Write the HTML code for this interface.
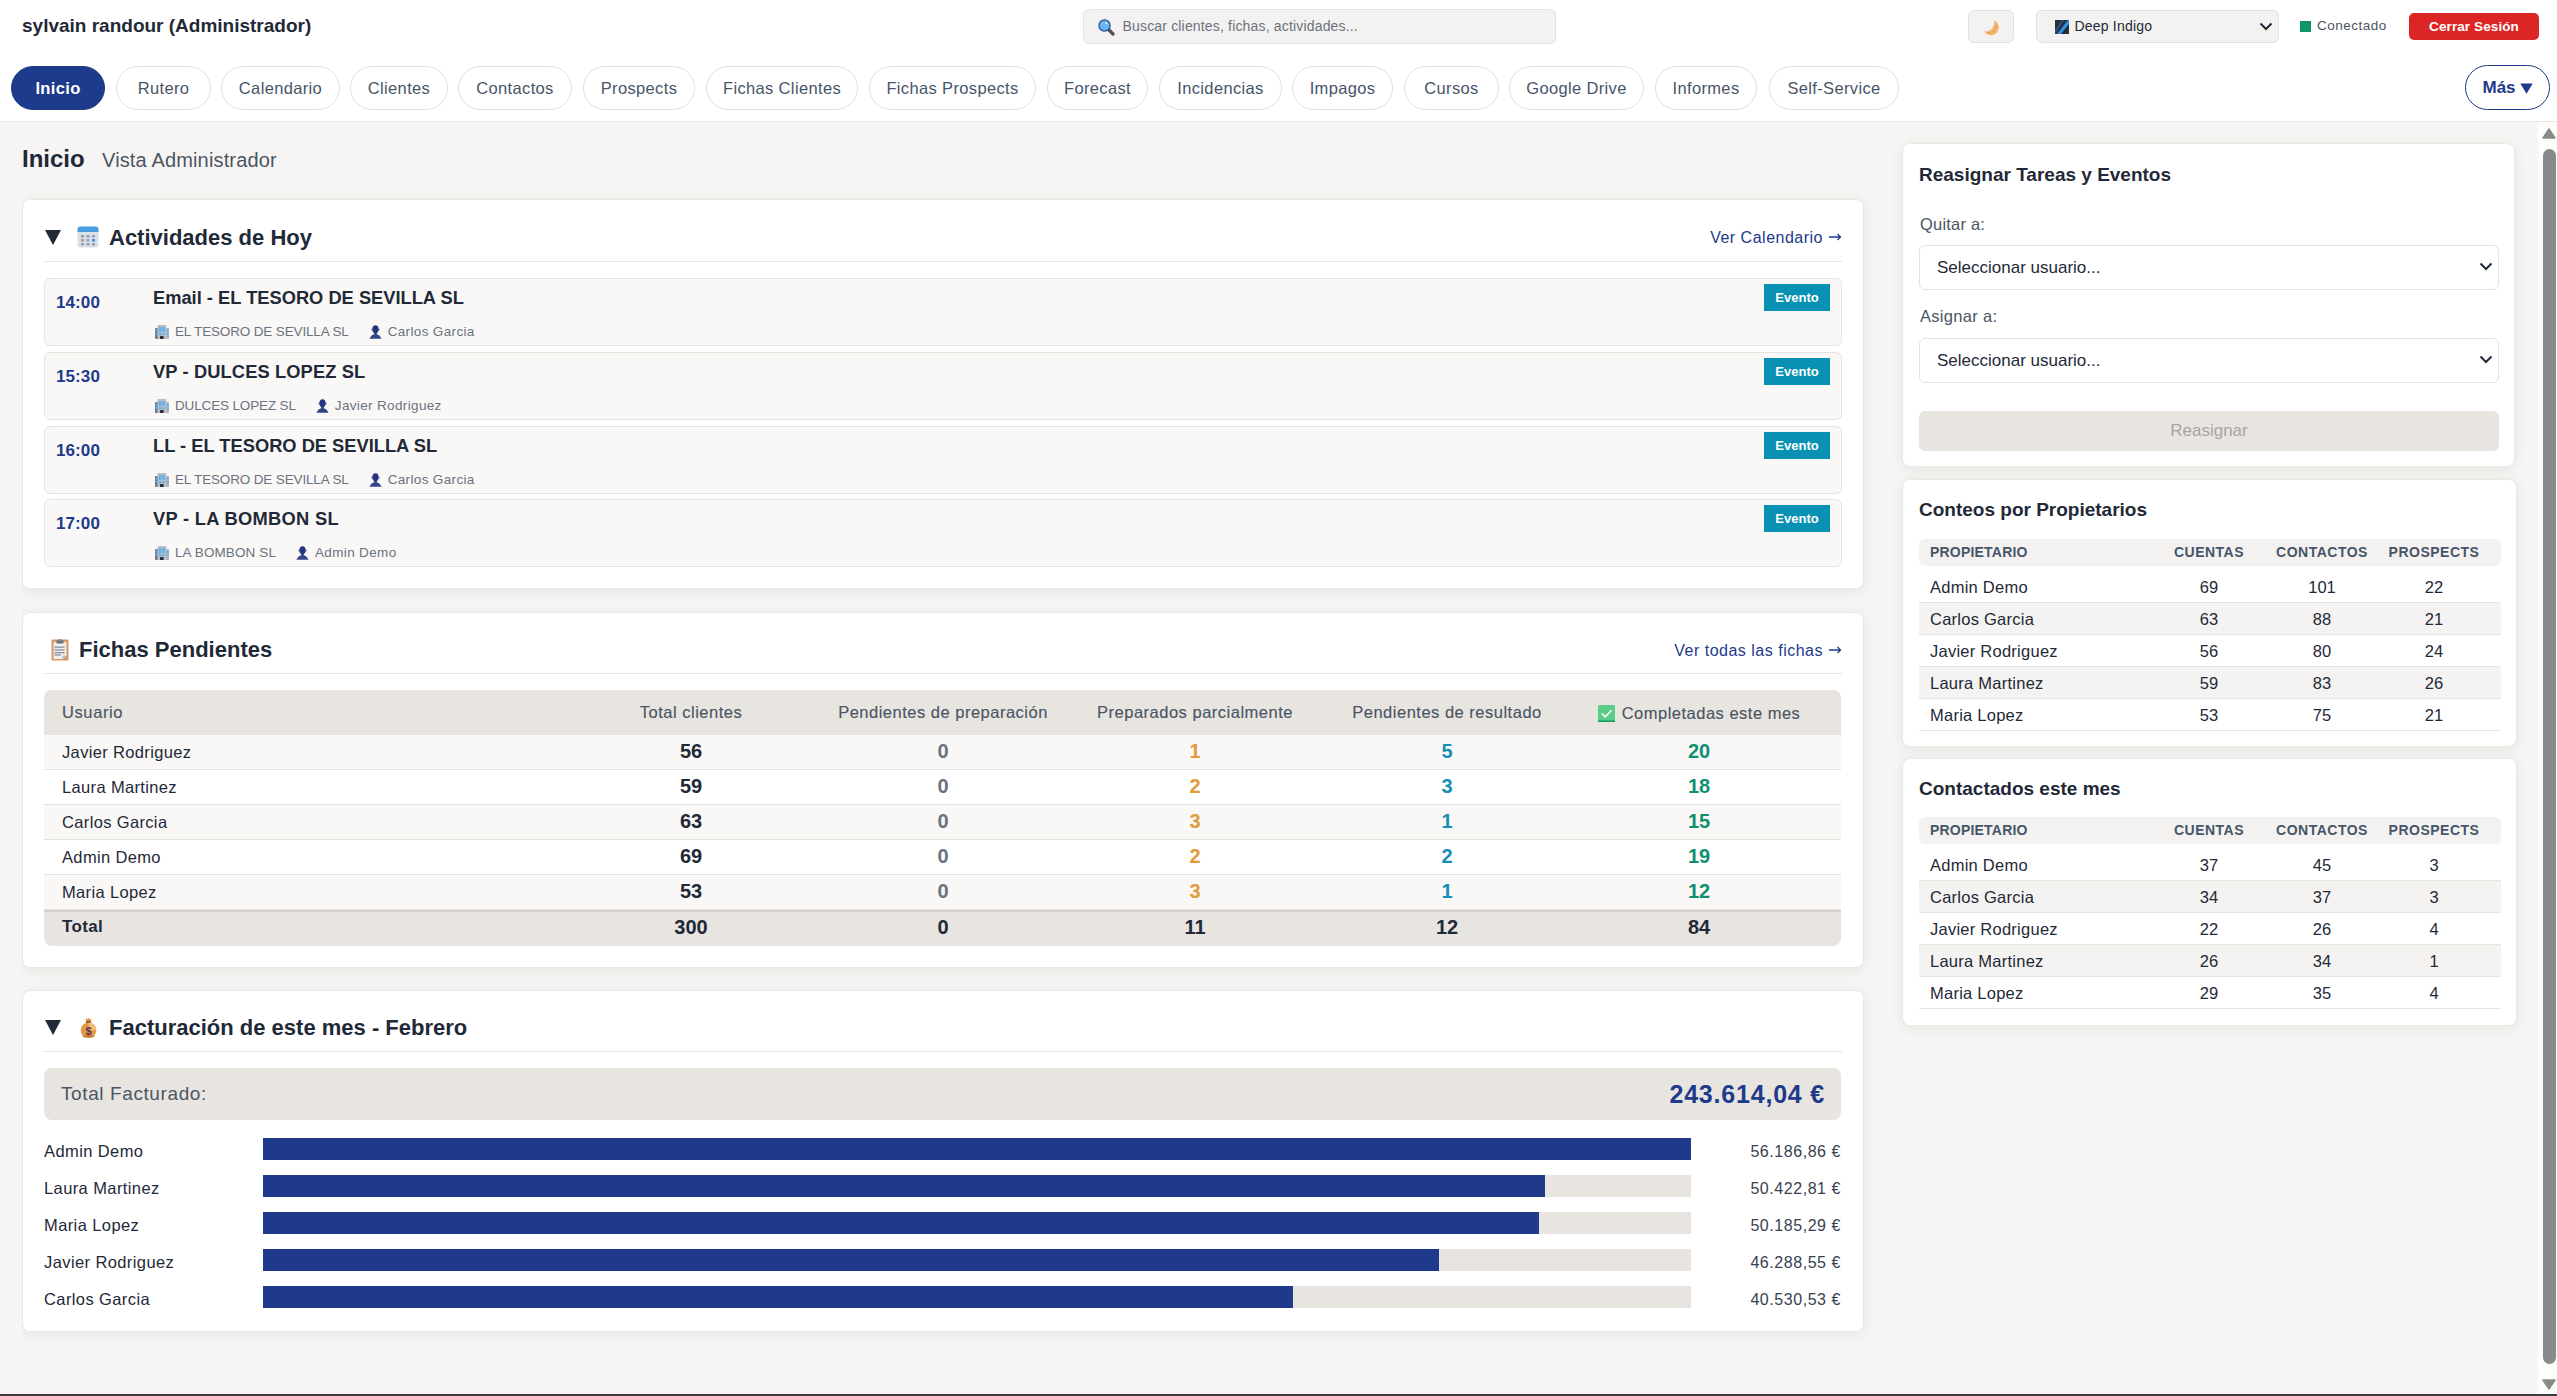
<!DOCTYPE html>
<html lang="es">
<head>
<meta charset="utf-8">
<title>Inicio</title>
<style>
*{box-sizing:border-box;margin:0;padding:0}
html,body{width:2557px;height:1396px;overflow:hidden}
body{font-family:"Liberation Sans",sans-serif;background:#f6f5f3;color:#1f2937;position:relative}
.abs{position:absolute}
/* header */
#hdr{position:absolute;left:0;top:0;width:2557px;height:55px;background:#fff}
#user{left:22px;top:15px;font-size:19px;font-weight:700;color:#1f2937;white-space:nowrap}
#search{left:1083px;top:9px;width:473px;height:35px;background:#f3f2f0;border:1px solid #e5e2de;border-radius:6px}
#search .ph{position:absolute;left:38.5px;top:8px;font-size:14px;letter-spacing:.17px;color:#6b7280;white-space:nowrap}
#moon{left:1968px;top:10px;width:46px;height:33px;background:#f3f2f0;border:1px solid #e5e1dc;border-radius:6px}
#theme{left:2036px;top:10px;width:243px;height:33px;background:#f3f2f0;border:1px solid #e5e1dc;border-radius:6px}
#theme .t{position:absolute;left:37.5px;top:7px;font-size:14px;letter-spacing:.2px;color:#1f2937;white-space:nowrap}
#conn{left:2300px;top:21px;width:11px;height:11px;background:#10956a}
#conntx{left:2317px;top:18px;font-size:13.5px;letter-spacing:.5px;color:#4b5563;white-space:nowrap}
#logout{left:2409px;top:13px;width:130px;height:27px;background:#dc2626;border-radius:5px;color:#fff;font-size:13.5px;letter-spacing:.1px;font-weight:700;text-align:center;line-height:27px;white-space:nowrap}
/* nav */
#nav{position:absolute;left:0;top:55px;width:2557px;height:67px;background:#fff;border-bottom:1px solid #e7e4e0}
.pill{position:absolute;top:11px;height:44px;border:1px solid #e3dfdb;border-radius:22px;background:#fff;color:#475569;font-size:16.5px;letter-spacing:.35px;text-align:center;line-height:42px;white-space:nowrap}
.pill.on{background:#1e3a8a;border-color:#1e3a8a;color:#fff;font-weight:700}
#mas{left:2465px;top:10px;width:85px;height:45px;border:1.6px solid #1e3a8a;border-radius:23px;color:#1e3a8a;font-weight:700;font-size:17px}
#mas span{position:absolute;left:16.5px;top:12px;white-space:nowrap}
#mas svg{position:absolute;left:53.5px;top:16.5px}
/* main */
#main{position:absolute;left:0;top:122px;width:2557px;height:1272px;overflow:hidden;background:#f6f5f3}

.card{position:absolute;background:#fff;border:1px solid #ebe8e4;border-radius:8px;box-shadow:0 2px 14px rgba(40,30,20,.07)}
h1.pg{position:absolute;left:22px;top:23px;font-size:24px;font-weight:700;color:#1f2937;white-space:nowrap}
.pgsub{position:absolute;left:102px;top:27px;font-size:20px;letter-spacing:.15px;color:#4b5563;white-space:nowrap}
.tri{position:absolute;width:0;height:0;border-left:8.5px solid transparent;border-right:8.5px solid transparent;border-top:15px solid #1f2937}
.ctitle{position:absolute;font-size:22px;font-weight:700;color:#1f2937;white-space:nowrap}
.clink{position:absolute;font-size:16px;letter-spacing:.5px;color:#1e3a8a;white-space:nowrap}
.sep{position:absolute;height:1px;background:#e7e5e4}
.item{position:absolute;left:21px;width:1798px;height:68px;background:#f9f8f6;border:1px solid #e7e4e0;border-radius:6px}
.item .tm{position:absolute;left:11px;top:14px;font-size:17px;letter-spacing:.1px;font-weight:700;color:#1e3a8a;white-space:nowrap}
.item .ti{position:absolute;left:108px;top:8px;font-size:18.3px;font-weight:700;color:#1f2937;white-space:nowrap}
.item .sub{position:absolute;left:110px;top:45px;font-size:13.5px;letter-spacing:-.15px;color:#6b7280;white-space:nowrap;display:flex;align-items:center}
.item .sub svg{margin-right:6px}
.item .badge{position:absolute;left:1719px;top:5px;width:66px;height:27px;background:#0891b2;color:#fff;font-size:13px;font-weight:700;text-align:center;line-height:27px}

.tbl{position:absolute;left:21px;top:77px;width:1797px}
.tr{position:relative;display:flex;height:35px;align-items:center;border-bottom:1px solid #e7e4e0}
.tr.h{height:45px;background:#e8e5e1;border-radius:8px 8px 0 0;border-bottom:none;color:#4b5563;font-size:16px}
.tr.odd{background:#f9f8f6}
.tr.ev{background:#fff}
.tr.tot{height:36px;padding-bottom:2px;background:#e8e5e1;border-top:2px solid #d6d2cd;border-bottom:none;border-radius:0 0 8px 8px}
.td{white-space:nowrap}
.td.n{width:521px;padding-left:18px;font-size:16.5px;letter-spacing:.35px;color:#1f2937}
.td.c{width:252px;text-align:center;font-size:20px;font-weight:700}
.tr.h .td.c{font-size:16.5px;font-weight:400;letter-spacing:.5px;color:#4b5563;-webkit-text-stroke:.15px #4b5563}
.tr.h .td.n{letter-spacing:.6px;color:#4b5563;-webkit-text-stroke:.15px #4b5563}
.td.c.last{width:268px;padding-right:16px}
.tr.odd .td.c,.tr.ev .td.c,.tr.tot .td.c{position:relative;top:-1px}
.bar{position:absolute;left:219px;width:1428px;height:22px;background:#e8e5e1}
.bar i{position:absolute;left:0;top:0;height:22px;background:#1f3a8a}
.bname{position:absolute;left:0;margin-top:2px;letter-spacing:.4px;font-size:16.5px;color:#1f2937;white-space:nowrap}
.bval{position:absolute;right:0;margin-top:2px;letter-spacing:.55px;font-size:16px;color:#374151;white-space:nowrap}
.pnl{position:absolute;background:#fff;border:1px solid #ebe8e4;border-radius:8px;box-shadow:0 2px 14px rgba(40,30,20,.07)}
.ptitle{position:absolute;left:16px;font-size:19px;font-weight:700;color:#1f2937;white-space:nowrap}
.plabel{position:absolute;left:17px;font-size:16.5px;color:#4b5563;white-space:nowrap}
.psel{position:absolute;left:16px;width:580px;height:45px;border:1px solid #e5e2de;border-radius:6px;background:#fff}
.psel span{position:absolute;left:17px;top:12px;font-size:17px;color:#1f2937;white-space:nowrap}
.psel svg{position:absolute;right:5px;top:16px}
.pbtn{position:absolute;left:16px;width:580px;height:40px;border-radius:6px;background:#e8e5e1;color:#a8a4a0;font-size:17px;text-align:center;line-height:40px}
.ptbl{position:absolute;left:16px;width:582px}
.ptr{display:flex;height:32px;align-items:center;border-bottom:1px solid #e7e4e0;font-size:16.5px;color:#1f2937;padding-top:2px}
.ptr.h{height:27px;background:#f3f2f0;border-radius:6px;border-bottom:none;font-size:14px;font-weight:700;color:#475569;margin-bottom:5px;letter-spacing:.5px;padding-bottom:2px;padding-top:0}
.ptr.h .a{letter-spacing:.2px}
.ptr.alt{background:#f4f3f1}
.ptr .a{width:236px;padding-left:11px;white-space:nowrap;letter-spacing:.25px}
.ptr .b{width:112px;text-align:center;margin-left:-2px;margin-right:2px}
.ptr .d{width:112px;text-align:center;margin-left:-1px;margin-right:1px}
.ptr .e{width:112px;text-align:center;margin-left:-1px}
#sb{position:absolute;left:2538px;top:0px;width:19px;height:1272px;background:#fdfdfc}
#bottombar{position:absolute;left:0;top:1394px;width:2557px;height:2px;background:#3b3b3d}
</style>
</head>
<body>
<div id="hdr">
  <div id="user" class="abs">sylvain randour (Administrador)</div>
  <div id="search" class="abs"><svg class="abs" style="left:14px;top:9px" width="17" height="17" viewBox="0 0 17 17"><path d="M10.5 10.5l4.5 4.5" stroke="#5a4a52" stroke-width="3.2" stroke-linecap="round"/><circle cx="6.5" cy="6.5" r="5.6" fill="#6ab4ef" stroke="#2b4c9a" stroke-width="1.2"/><circle cx="8.3" cy="4.3" r="1" fill="#dff0ff"/></svg><span class="ph">Buscar clientes, fichas, actividades...</span></div>
  <div id="moon" class="abs"><svg class="abs" style="left:14px;top:8px" width="17" height="17" viewBox="0 0 17 17"><path d="M11 1.2A7.8 7.8 0 1 1 1.2 12.3 8.8 8.8 0 0 0 11 1.2z" fill="#f2b56e"/><circle cx="6" cy="13.6" r=".8" fill="#d98c3e"/><circle cx="10.5" cy="12.2" r=".7" fill="#d98c3e"/><circle cx="13" cy="8" r=".7" fill="#d98c3e"/><circle cx="8.5" cy="14.5" r=".5" fill="#e6a050"/></svg></div>
  <div id="theme" class="abs"><svg class="abs" style="left:18px;top:9px" width="14" height="14" viewBox="0 0 14 14"><rect width="14" height="14" fill="#2a2f3a"/><path d="M6 14L14 4V0h-1L2 14z" fill="#2f8fe0"/><path d="M7.5 14L14 6.5V5L6.5 14z" fill="#1a2540"/><path d="M0 14L9 0H7L0 10z" fill="#2a6fc0" opacity=".6"/></svg><span class="t">Deep Indigo</span><svg class="abs" style="right:5px;top:11px" width="14" height="9" viewBox="0 0 14 9"><path d="M1.5 1.5l5.5 5.5 5.5-5.5" stroke="#1f2937" stroke-width="2" fill="none"/></svg></div>
  <div id="conn" class="abs"></div>
  <div id="conntx" class="abs">Conectado</div>
  <div id="logout" class="abs">Cerrar Sesión</div>
</div>
<div id="nav">
  <div class="pill on" style="left:11px;width:94px">Inicio</div>
  <div class="pill" style="left:116px;width:95px">Rutero</div>
  <div class="pill" style="left:221px;width:119px">Calendario</div>
  <div class="pill" style="left:350px;width:98px">Clientes</div>
  <div class="pill" style="left:458px;width:114px">Contactos</div>
  <div class="pill" style="left:583px;width:112px">Prospects</div>
  <div class="pill" style="left:706px;width:152px">Fichas Clientes</div>
  <div class="pill" style="left:869px;width:167px">Fichas Prospects</div>
  <div class="pill" style="left:1047px;width:101px">Forecast</div>
  <div class="pill" style="left:1159px;width:123px">Incidencias</div>
  <div class="pill" style="left:1292px;width:101px">Impagos</div>
  <div class="pill" style="left:1404px;width:95px">Cursos</div>
  <div class="pill" style="left:1509px;width:135px">Google Drive</div>
  <div class="pill" style="left:1655px;width:102px">Informes</div>
  <div class="pill" style="left:1769px;width:130px">Self-Service</div>
  <div id="mas" class="abs"><span>Más</span><svg width="13" height="11" viewBox="0 0 13 11"><path d="M0.3 0.5h12.4L6.5 10.8z" fill="#1e3a8a"/></svg></div>
</div>
<div id="main">
  <h1 class="pg">Inicio</h1>
  <div class="pgsub">Vista Administrador</div>
  <div class="card" id="c1" style="left:22px;top:77px;width:1842px;height:390px">
    <div class="tri" style="left:22px;top:30px"></div>
    <svg class="abs" style="left:54px;top:26px" width="22" height="22" viewBox="0 0 22 22"><rect x="0.5" y="1" width="21" height="20.5" rx="3" fill="#d9e1e8"/><path d="M0.5 3.5a3 3 0 0 1 3-3h15a3 3 0 0 1 3 3v2.5h-21z" fill="#4a9de0"/><g fill="#9aa0aa"><rect x="4" y="9" width="3" height="2.5"/><rect x="9.5" y="9" width="3" height="2.5"/><rect x="15" y="9" width="3" height="2.5"/><rect x="4" y="13" width="3" height="2.5"/><rect x="9.5" y="13" width="3" height="2.5"/><rect x="4" y="17" width="3" height="2.5"/><rect x="9.5" y="17" width="3" height="2.5"/><rect x="15" y="17" width="3" height="2.5"/></g><rect x="15" y="13" width="3" height="2.5" fill="#3d8fdc"/></svg>
    <div class="ctitle" style="left:86px;top:25px">Actividades de Hoy</div>
    <div class="clink" style="right:21px;top:29px">Ver Calendario<svg style="display:inline-block;vertical-align:2px;margin-left:6px" width="13" height="8" viewBox="0 0 13 8"><path d="M0 4h11.5M8.5 1l3 3-3 3" stroke="#1e3a8a" stroke-width="1.3" fill="none"/></svg></div>
    <div class="sep" style="left:21px;top:61px;width:1798px"></div>
    <div class="item" style="top:78px"><div class="tm">14:00</div><div class="ti">Email - EL TESORO DE SEVILLA SL</div><div class="sub"><svg width="14" height="14" viewBox="0 0 14 14"><rect x="0" y="3" width="3" height="11" rx=".8" fill="#6f7b8c"/><rect x="11" y="3" width="3" height="11" rx=".8" fill="#aab3c0"/><rect x="2.5" y="0" width="9" height="14" rx=".8" fill="#b9bec6"/><g fill="#5ab0f0"><rect x="0.3" y="5" width="2" height="1.6"/><rect x="0.3" y="8" width="2" height="1.6"/><rect x="11.7" y="5" width="2" height="1.6"/><rect x="11.7" y="8" width="2" height="1.6"/><rect x="4" y="2" width="2.3" height="5"/><rect x="7.3" y="2" width="2.3" height="5"/><rect x="4" y="8.3" width="2.3" height="1.8"/><rect x="7.3" y="8.3" width="2.3" height="1.8"/></g><rect x="5" y="11" width="3.6" height="3" rx=".5" fill="#2a2e36"/></svg><span>EL TESORO DE SEVILLA SL</span><span style="display:inline-block;width:20px"></span><svg width="13" height="14" viewBox="0 0 13 14"><ellipse cx="6.5" cy="4.2" rx="3.1" ry="3.9" fill="#26357f"/><rect x="2.6" y="3.6" width="1" height="2" rx=".5" fill="#26357f"/><rect x="9.4" y="3.6" width="1" height="2" rx=".5" fill="#26357f"/><path d="M0.4 13.8L2.6 10.6 5 9.2h3l2.4 1.4 2.2 3.2z" fill="#34448a"/><rect x="5.2" y="7.2" width="2.6" height="2.4" fill="#26357f"/></svg><span style="letter-spacing:.35px">Carlos Garcia</span></div><div class="badge">Evento</div></div>
    <div class="item" style="top:152px"><div class="tm">15:30</div><div class="ti" style="letter-spacing:.12px">VP - DULCES LOPEZ SL</div><div class="sub"><svg width="14" height="14" viewBox="0 0 14 14"><rect x="0" y="3" width="3" height="11" rx=".8" fill="#6f7b8c"/><rect x="11" y="3" width="3" height="11" rx=".8" fill="#aab3c0"/><rect x="2.5" y="0" width="9" height="14" rx=".8" fill="#b9bec6"/><g fill="#5ab0f0"><rect x="0.3" y="5" width="2" height="1.6"/><rect x="0.3" y="8" width="2" height="1.6"/><rect x="11.7" y="5" width="2" height="1.6"/><rect x="11.7" y="8" width="2" height="1.6"/><rect x="4" y="2" width="2.3" height="5"/><rect x="7.3" y="2" width="2.3" height="5"/><rect x="4" y="8.3" width="2.3" height="1.8"/><rect x="7.3" y="8.3" width="2.3" height="1.8"/></g><rect x="5" y="11" width="3.6" height="3" rx=".5" fill="#2a2e36"/></svg><span>DULCES LOPEZ SL</span><span style="display:inline-block;width:20px"></span><svg width="13" height="14" viewBox="0 0 13 14"><ellipse cx="6.5" cy="4.2" rx="3.1" ry="3.9" fill="#26357f"/><rect x="2.6" y="3.6" width="1" height="2" rx=".5" fill="#26357f"/><rect x="9.4" y="3.6" width="1" height="2" rx=".5" fill="#26357f"/><path d="M0.4 13.8L2.6 10.6 5 9.2h3l2.4 1.4 2.2 3.2z" fill="#34448a"/><rect x="5.2" y="7.2" width="2.6" height="2.4" fill="#26357f"/></svg><span style="letter-spacing:.35px">Javier Rodriguez</span></div><div class="badge">Evento</div></div>
    <div class="item" style="top:226px"><div class="tm">16:00</div><div class="ti">LL - EL TESORO DE SEVILLA SL</div><div class="sub"><svg width="14" height="14" viewBox="0 0 14 14"><rect x="0" y="3" width="3" height="11" rx=".8" fill="#6f7b8c"/><rect x="11" y="3" width="3" height="11" rx=".8" fill="#aab3c0"/><rect x="2.5" y="0" width="9" height="14" rx=".8" fill="#b9bec6"/><g fill="#5ab0f0"><rect x="0.3" y="5" width="2" height="1.6"/><rect x="0.3" y="8" width="2" height="1.6"/><rect x="11.7" y="5" width="2" height="1.6"/><rect x="11.7" y="8" width="2" height="1.6"/><rect x="4" y="2" width="2.3" height="5"/><rect x="7.3" y="2" width="2.3" height="5"/><rect x="4" y="8.3" width="2.3" height="1.8"/><rect x="7.3" y="8.3" width="2.3" height="1.8"/></g><rect x="5" y="11" width="3.6" height="3" rx=".5" fill="#2a2e36"/></svg><span>EL TESORO DE SEVILLA SL</span><span style="display:inline-block;width:20px"></span><svg width="13" height="14" viewBox="0 0 13 14"><ellipse cx="6.5" cy="4.2" rx="3.1" ry="3.9" fill="#26357f"/><rect x="2.6" y="3.6" width="1" height="2" rx=".5" fill="#26357f"/><rect x="9.4" y="3.6" width="1" height="2" rx=".5" fill="#26357f"/><path d="M0.4 13.8L2.6 10.6 5 9.2h3l2.4 1.4 2.2 3.2z" fill="#34448a"/><rect x="5.2" y="7.2" width="2.6" height="2.4" fill="#26357f"/></svg><span style="letter-spacing:.35px">Carlos Garcia</span></div><div class="badge">Evento</div></div>
    <div class="item" style="top:299px"><div class="tm">17:00</div><div class="ti" style="letter-spacing:.3px">VP - LA BOMBON SL</div><div class="sub"><svg width="14" height="14" viewBox="0 0 14 14"><rect x="0" y="3" width="3" height="11" rx=".8" fill="#6f7b8c"/><rect x="11" y="3" width="3" height="11" rx=".8" fill="#aab3c0"/><rect x="2.5" y="0" width="9" height="14" rx=".8" fill="#b9bec6"/><g fill="#5ab0f0"><rect x="0.3" y="5" width="2" height="1.6"/><rect x="0.3" y="8" width="2" height="1.6"/><rect x="11.7" y="5" width="2" height="1.6"/><rect x="11.7" y="8" width="2" height="1.6"/><rect x="4" y="2" width="2.3" height="5"/><rect x="7.3" y="2" width="2.3" height="5"/><rect x="4" y="8.3" width="2.3" height="1.8"/><rect x="7.3" y="8.3" width="2.3" height="1.8"/></g><rect x="5" y="11" width="3.6" height="3" rx=".5" fill="#2a2e36"/></svg><span style="letter-spacing:.1px">LA BOMBON SL</span><span style="display:inline-block;width:20px"></span><svg width="13" height="14" viewBox="0 0 13 14"><ellipse cx="6.5" cy="4.2" rx="3.1" ry="3.9" fill="#26357f"/><rect x="2.6" y="3.6" width="1" height="2" rx=".5" fill="#26357f"/><rect x="9.4" y="3.6" width="1" height="2" rx=".5" fill="#26357f"/><path d="M0.4 13.8L2.6 10.6 5 9.2h3l2.4 1.4 2.2 3.2z" fill="#34448a"/><rect x="5.2" y="7.2" width="2.6" height="2.4" fill="#26357f"/></svg><span style="letter-spacing:.35px">Admin Demo</span></div><div class="badge">Evento</div></div>
    
  </div>

  <div class="card" id="c2" style="left:22px;top:490px;width:1842px;height:356px">
    <svg class="abs" style="left:28px;top:26px" width="18" height="22" viewBox="0 0 18 22"><rect x="0.5" y="0.5" width="17" height="21" rx="1" fill="#d79866"/><path d="M2.5 3h13v13.5l-4 3.5h-9z" fill="#eeeeec"/><path d="M11.5 20l4-3.5h-4z" fill="#b9c4d0"/><path d="M5.5 1.2h7v3.3h-7z" fill="#6c7078"/><rect x="7.5" y="0" width="3" height="2" fill="#8a8e96"/><g fill="#8b8f98"><rect x="3.5" y="7.5" width="10" height="1.3"/><rect x="3.5" y="10.3" width="10" height="1.3"/><rect x="3.5" y="13" width="10" height="1.3"/><rect x="3.5" y="15.3" width="6.5" height="1.3"/></g></svg>
    <div class="ctitle" style="left:56px;top:24px">Fichas Pendientes</div>
    <div class="clink" style="right:21px;top:29px">Ver todas las fichas<svg style="display:inline-block;vertical-align:2px;margin-left:6px" width="13" height="8" viewBox="0 0 13 8"><path d="M0 4h11.5M8.5 1l3 3-3 3" stroke="#1e3a8a" stroke-width="1.3" fill="none"/></svg></div>
    <div class="sep" style="left:21px;top:60px;width:1798px"></div>
    <div class="tbl"><div class="tr h"><div class="td n">Usuario</div><div class="td c">Total clientes</div><div class="td c">Pendientes de preparación</div><div class="td c">Preparados parcialmente</div><div class="td c">Pendientes de resultado</div><div class="td c last"><span style="position:relative;top:1px"><svg style="vertical-align:-3px;margin-right:7px" width="17" height="17" viewBox="0 0 17 17"><rect width="17" height="17" rx="1.5" fill="#5acd88"/><rect y="15.5" width="17" height="1.5" fill="#0f9a60"/><path d="M3.8 8.5l3.4 3.3 6.4-6.6" stroke="#fff" stroke-width="1.6" fill="none"/></svg>Completadas este mes</span></div></div><div class="tr odd"><div class="td n">Javier Rodriguez</div><div class="td c" style="color:#1f2937">56</div><div class="td c" style="color:#6b7280">0</div><div class="td c" style="color:#e39a3b">1</div><div class="td c" style="color:#1590b4">5</div><div class="td c last" style="color:#109070">20</div></div><div class="tr ev"><div class="td n">Laura Martinez</div><div class="td c" style="color:#1f2937">59</div><div class="td c" style="color:#6b7280">0</div><div class="td c" style="color:#e39a3b">2</div><div class="td c" style="color:#1590b4">3</div><div class="td c last" style="color:#109070">18</div></div><div class="tr odd"><div class="td n">Carlos Garcia</div><div class="td c" style="color:#1f2937">63</div><div class="td c" style="color:#6b7280">0</div><div class="td c" style="color:#e39a3b">3</div><div class="td c" style="color:#1590b4">1</div><div class="td c last" style="color:#109070">15</div></div><div class="tr ev"><div class="td n">Admin Demo</div><div class="td c" style="color:#1f2937">69</div><div class="td c" style="color:#6b7280">0</div><div class="td c" style="color:#e39a3b">2</div><div class="td c" style="color:#1590b4">2</div><div class="td c last" style="color:#109070">19</div></div><div class="tr odd"><div class="td n">Maria Lopez</div><div class="td c" style="color:#1f2937">53</div><div class="td c" style="color:#6b7280">0</div><div class="td c" style="color:#e39a3b">3</div><div class="td c" style="color:#1590b4">1</div><div class="td c last" style="color:#109070">12</div></div><div class="tr tot"><div class="td n" style="font-weight:700;font-size:17px;padding-bottom:3px">Total</div><div class="td c" style="color:#1f2937">300</div><div class="td c" style="color:#1f2937">0</div><div class="td c" style="color:#1f2937">11</div><div class="td c" style="color:#1f2937">12</div><div class="td c last" style="color:#1f2937">84</div></div></div>
  </div>

  <div class="card" id="c3" style="left:22px;top:868px;width:1842px;height:342px">
    <div class="tri" style="left:22px;top:29px"></div>
    <svg class="abs" style="left:56px;top:26px" width="19" height="21" viewBox="0 0 19 21"><path d="M6.5 1.2l1.2 1 1.8-1.2 1.8 1.2 1.2-1-.6 3h-4.8z" fill="#e8993e"/><rect x="7" y="4" width="5" height="2.3" rx=".8" fill="#8c4a2e"/><circle cx="9.5" cy="13.3" r="7.8" fill="#e49a45"/><path d="M9.5 5.5a7.8 7.8 0 0 1 7.8 7.8H9.5z" fill="#f4ba78"/><path d="M3 18.5h13l-1.5 1.8h-10z" fill="#c97a30"/><text x="9.5" y="17.8" font-size="11" font-family="Liberation Sans" font-weight="700" text-anchor="middle" fill="#5a3550">$</text></svg>
    <div class="ctitle" style="left:86px;top:24px">Facturación de este mes - Febrero</div>
    <div class="sep" style="left:21px;top:60px;width:1798px"></div>
    <div class="abs" style="left:21px;top:77px;width:1797px;height:52px;background:#e8e5e1;border-radius:8px">
      <div class="abs" style="left:17px;top:15px;font-size:19px;letter-spacing:.6px;color:#4b5563;white-space:nowrap">Total Facturado:</div>
      <div class="abs" style="right:16px;top:12px;font-size:25px;letter-spacing:.8px;font-weight:700;color:#1e3a8a;white-space:nowrap">243.614,04 €</div>
    </div>
        <div class="abs" style="left:21px;top:78px;width:1797px;height:180px"><div class="bname" style="top:71px">Admin Demo</div><div class="bar" style="top:69px"><i style="width:1428.0px"></i></div><div class="bval" style="top:72px">56.186,86 €</div><div class="bname" style="top:108px">Laura Martinez</div><div class="bar" style="top:106px"><i style="width:1281.5px"></i></div><div class="bval" style="top:109px">50.422,81 €</div><div class="bname" style="top:145px">Maria Lopez</div><div class="bar" style="top:143px"><i style="width:1275.5px"></i></div><div class="bval" style="top:146px">50.185,29 €</div><div class="bname" style="top:182px">Javier Rodriguez</div><div class="bar" style="top:180px"><i style="width:1176.4px"></i></div><div class="bval" style="top:183px">46.288,55 €</div><div class="bname" style="top:219px">Carlos Garcia</div><div class="bar" style="top:217px"><i style="width:1030.1px"></i></div><div class="bval" style="top:220px">40.530,53 €</div></div>
  </div>

  <div class="pnl" style="left:1902px;top:21px;width:613px;height:324px">
    <div class="ptitle" style="top:20px">Reasignar Tareas y Eventos</div>
    <div class="plabel" style="top:71px;letter-spacing:.2px">Quitar a:</div>
    <div class="psel" style="top:101px"><span>Seleccionar usuario...</span><svg width="14" height="9" viewBox="0 0 14 9"><path d="M1.5 1.5l5.5 5.5 5.5-5.5" stroke="#1f2937" stroke-width="2" fill="none"/></svg></div>
    <div class="plabel" style="top:163px;letter-spacing:.3px">Asignar a:</div>
    <div class="psel" style="top:194px"><span>Seleccionar usuario...</span><svg width="14" height="9" viewBox="0 0 14 9"><path d="M1.5 1.5l5.5 5.5 5.5-5.5" stroke="#1f2937" stroke-width="2" fill="none"/></svg></div>
    <div class="pbtn" style="top:267px">Reasignar</div>
  </div>

  <div class="pnl" style="left:1902px;top:357px;width:615px;height:268px">
    <div class="ptitle" style="top:19px">Conteos por Propietarios</div>
    <div class="ptbl" style="top:59px"><div class="ptr h"><div class="a">PROPIETARIO</div><div class="b">CUENTAS</div><div class="d">CONTACTOS</div><div class="e">PROSPECTS</div></div><div class="ptr "><div class="a">Admin Demo</div><div class="b">69</div><div class="d">101</div><div class="e">22</div></div><div class="ptr alt"><div class="a">Carlos Garcia</div><div class="b">63</div><div class="d">88</div><div class="e">21</div></div><div class="ptr "><div class="a">Javier Rodriguez</div><div class="b">56</div><div class="d">80</div><div class="e">24</div></div><div class="ptr alt"><div class="a">Laura Martinez</div><div class="b">59</div><div class="d">83</div><div class="e">26</div></div><div class="ptr "><div class="a">Maria Lopez</div><div class="b">53</div><div class="d">75</div><div class="e">21</div></div></div>
  </div>

  <div class="pnl" style="left:1902px;top:636px;width:615px;height:268px">
    <div class="ptitle" style="top:19px">Contactados este mes</div>
    <div class="ptbl" style="top:58px"><div class="ptr h"><div class="a">PROPIETARIO</div><div class="b">CUENTAS</div><div class="d">CONTACTOS</div><div class="e">PROSPECTS</div></div><div class="ptr "><div class="a">Admin Demo</div><div class="b">37</div><div class="d">45</div><div class="e">3</div></div><div class="ptr alt"><div class="a">Carlos Garcia</div><div class="b">34</div><div class="d">37</div><div class="e">3</div></div><div class="ptr "><div class="a">Javier Rodriguez</div><div class="b">22</div><div class="d">26</div><div class="e">4</div></div><div class="ptr alt"><div class="a">Laura Martinez</div><div class="b">26</div><div class="d">34</div><div class="e">1</div></div><div class="ptr "><div class="a">Maria Lopez</div><div class="b">29</div><div class="d">35</div><div class="e">4</div></div></div>
  </div>

  <div class="abs" style="left:0;top:0;width:22px;height:1272px;background:#f6f5f3;z-index:2"></div>
  <div id="sb"><svg class="abs" style="left:4px;top:6px" width="14" height="11" viewBox="0 0 14 11"><path d="M7 1L13 10H1z" fill="#8a8a8a" stroke="#8a8a8a" stroke-width="1.5" stroke-linejoin="round"/></svg><div class="abs" style="left:5px;top:27px;width:13px;height:1215px;background:#8a8a8a;border-radius:6.5px"></div><svg class="abs" style="left:4px;top:1257px" width="14" height="11" viewBox="0 0 14 11"><path d="M7 10L13 1H1z" fill="#8a8a8a" stroke="#8a8a8a" stroke-width="1.5" stroke-linejoin="round"/></svg></div>
</div>
<div id="bottombar"></div>
</body>
</html>
